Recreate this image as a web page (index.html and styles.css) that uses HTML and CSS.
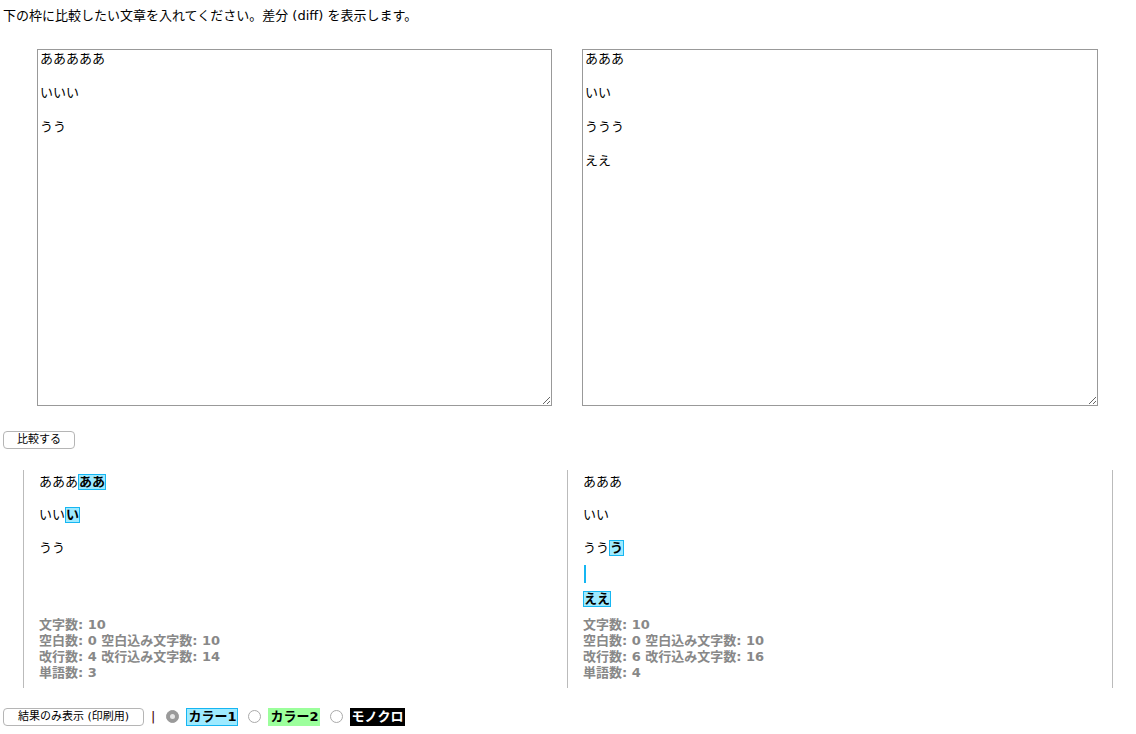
FILE: index.html
```html
<!DOCTYPE html>
<html lang="ja">
<head>
<meta charset="utf-8">
<title>diff</title>
<link rel="stylesheet" href="styles.css">
</head>
<body>
<p class="intro">下の枠に比較したい文章を入れてください。差分 (diff) を表示します。</p>
<div class="inputs">
<textarea class="src">あああああ

いいい

うう</textarea>
<textarea class="src">あああ

いい

ううう

ええ</textarea>
</div>
<div class="btnrow"><button class="btn cmp">比較する</button></div>
<div class="results">
  <div class="cell diff left">
    <div class="ln">あああ<span class="hl">ああ</span></div>
    <div class="ln"></div>
    <div class="ln">いい<span class="hl">い</span></div>
    <div class="ln"></div>
    <div class="ln">うう</div>
  </div>
  <div class="cell diff right">
    <div class="ln">あああ</div>
    <div class="ln"></div>
    <div class="ln">いい</div>
    <div class="ln"></div>
    <div class="ln">うう<span class="hl">う</span></div>
    <div class="nlbar"></div>
    <div class="ln last"><span class="hl">ええ</span></div>
  </div>
  <div class="cell stats left">
    <div>文字数: 10</div>
    <div>空白数: 0 空白込み文字数: 10</div>
    <div>改行数: 4 改行込み文字数: 14</div>
    <div>単語数: 3</div>
  </div>
  <div class="cell stats right">
    <div>文字数: 10</div>
    <div>空白数: 0 空白込み文字数: 10</div>
    <div>改行数: 6 改行込み文字数: 16</div>
    <div>単語数: 4</div>
  </div>
</div>
<div class="bottom">
  <button class="btn print">結果のみ表示 (印刷用)</button>
  <span class="sep">|</span>
  <span class="radio checked"></span><span class="tag c1">カラー1</span>
  <span class="radio"></span><span class="tag c2">カラー2</span>
  <span class="radio"></span><span class="tag mono">モノクロ</span>
</div>
</body>
</html>
```
FILE: styles.css
```css
html, body {
  margin: 0;
  padding: 0;
  background: #fff;
}
body {
  font-family: "DejaVu Sans", "Noto Sans CJK JP", sans-serif;
  font-size: 13px;
  color: #000;
  width: 1136px;
}
.intro {
  margin: 0;
  padding: 8px 0 0 3px;
  line-height: 16px;
  height: 16px;
}
.inputs {
  display: flex;
  gap: 30px;
  padding: 25px 0 0 37px;
}
.src {
  box-sizing: border-box;
  width: 515px;
  height: 357px;
  margin: 0;
  border: 1px solid #999;
  padding: 0 2px;
  font-family: "DejaVu Sans", "Noto Sans CJK JP", sans-serif;
  font-size: 13px;
  line-height: 17px;
  color: #000;
  resize: both;
  outline: none;
}
.src:last-child {
  width: 516px;
}
.btnrow {
  padding: 25px 0 0 3px;
  height: 18px;
}
.btn {
  box-sizing: border-box;
  height: 18px;
  padding: 0;
  margin: 0;
  border: 1px solid #b5b5b5;
  border-radius: 4px;
  background: #fff;
  font-family: "DejaVu Sans", "Noto Sans CJK JP", sans-serif;
  font-size: 11px;
  line-height: 16px;
  color: #000;
}
.cmp { width: 72px; }
.print { width: 141px; }
.results {
  display: grid;
  grid-template-columns: 544px 546px;
  margin: 21px 0 0 23px;
}
.cell {
  box-sizing: border-box;
  border-left: 1px solid #bbb;
  padding-left: 15px;
}
.cell.right {
  border-right: 1px solid #bbb;
}
.diff {
  padding-top: 4px;
}
.ln {
  height: 16.5px;
  line-height: 16.5px;
}
.hl {
  box-sizing: border-box;
  display: inline-block;
  height: 16px;
  line-height: 14px;
  background: #9eeaff;
  border: 1px solid #16b6f2;
  font-weight: bold;
  vertical-align: top;
}
.nlbar {
  width: 2px;
  height: 18px;
  margin: 8px 0 0 1px;
  background: #16b6f2;
}
.ln.last {
  margin-top: 8px;
  height: 16px;
}
.stats {
  padding-top: 10px;
  padding-bottom: 7px;
  color: #888;
  font-weight: bold;
  line-height: 16px;
}
.bottom {
  display: flex;
  align-items: center;
  padding: 20px 0 0 3px;
  height: 18px;
}
.sep {
  margin: 0 11px 0 7px;
  color: #400;
  font-size: 13px;
}
.radio {
  box-sizing: border-box;
  width: 13px;
  height: 13px;
  border-radius: 50%;
  border: 1px solid #aaa;
  background: #fff;
  margin-right: 7px;
  position: relative;
}
.radio.checked {
  background: #9a9a9a;
  border-color: #9a9a9a;
}
.radio.checked::after {
  content: "";
  position: absolute;
  left: 3px;
  top: 3px;
  width: 5px;
  height: 5px;
  border-radius: 50%;
  background: #e6e6e6;
}
.tag {
  box-sizing: border-box;
  height: 18px;
  line-height: 16px;
  font-weight: bold;
  padding: 0 1px;
  margin-right: 10px;
}
.c1 {
  background: #9eeaff;
  border: 1px solid #16b6f2;
}
.c2 {
  background: #9cff9c;
  border: 1px solid #9cff9c;
}
.mono {
  background: #000;
  color: #fff;
  border: 1px solid #000;
  padding: 0;
}
```
